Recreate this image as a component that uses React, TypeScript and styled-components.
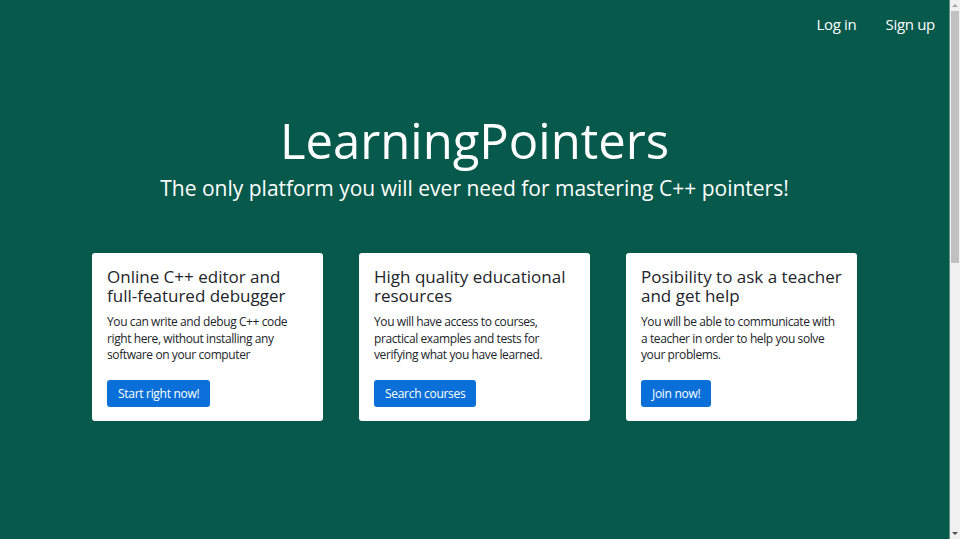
import React from "react";
import styled, { createGlobalStyle } from "styled-components";

const GlobalStyle = createGlobalStyle`
    html, body {
        margin: 0;
        padding: 0;
        overflow: hidden;
        background-color: #07594b;
        font-family: "Open Sans", "Noto Sans", sans-serif;
    }
`;

const features = [
    {
        id: 1,
        title: "Online C++ editor and full-featured debugger",
        text: "You can write and debug C++ code right here, without installing any software on your computer",
        action: "Start right now!",
    },
    {
        id: 2,
        title: "High quality educational resources",
        text: "You will have access to courses, practical examples and tests for verifying what you have learned.",
        action: "Search courses",
    },
    {
        id: 3,
        title: "Posibility to ask a teacher and get help",
        text: "You will be able to communicate with a teacher in order to help you solve your problems.",
        action: "Join now!",
    },
];

function App() {
    return (
        <Shell>
            <GlobalStyle />
            <PageStyled>
                <nav className="top-nav">
                    <a href="#login">Log in</a>
                    <a href="#signup">Sign up</a>
                </nav>
                <header className="hero">
                    <h1>LearningPointers</h1>
                    <p>The only platform you will ever need for mastering C++ pointers!</p>
                </header>
                <CardsRow>
                    {features.map((item) => (
                        <Card key={item.id}>
                            <h2>{item.title}</h2>
                            <p>{item.text}</p>
                            <Button>{item.action}</Button>
                        </Card>
                    ))}
                </CardsRow>
            </PageStyled>
            <ScrollTrack>
                <Arrow $down={false} />
                <div className="thumb-area">
                    <div className="thumb" />
                </div>
                <Arrow $down />
            </ScrollTrack>
        </Shell>
    );
}

const Shell = styled.div`
    display: flex;
    height: 100vh;
`;

const PageStyled = styled.main`
    flex: 1;
    color: #fff;

    .top-nav {
        display: flex;
        justify-content: flex-end;
        gap: 29px;
        padding: 12px 14px 0 0;
        height: 30px;

        a {
            color: #fff;
            text-decoration: none;
            font-size: 15px;
            letter-spacing: -0.3px;
            line-height: 24px;
        }
    }

    .hero {
        text-align: center;
        padding-top: 68px;

        h1 {
            margin: 0;
            font-size: 49px;
            font-weight: 400;
            line-height: 60px;
        }

        p {
            margin: 3px 0 0;
            font-size: 21px;
            line-height: 30px;
        }
    }
`;

const CardsRow = styled.section`
    display: grid;
    grid-template-columns: repeat(3, 231px);
    justify-content: center;
    gap: 36px;
    margin-top: 50px;
`;

const Card = styled.div`
    background: #fff;
    border-radius: 3px;
    padding: 14px 15px 14px;
    color: #212529;
    height: 168px;
    box-sizing: border-box;

    h2 {
        margin: 0;
        font-size: 17px;
        font-weight: 400;
        line-height: 19px;
    }

    p {
        margin: 9px 0 0;
        font-size: 12px;
        letter-spacing: -0.4px;
        line-height: 16.5px;
        height: 50px;
    }
`;

const Button = styled.button`
    margin-top: 16px;
    background: #0a6fd8;
    color: #fff;
    border: none;
    border-radius: 3px;
    height: 27px;
    padding: 0 11px;
    font-family: "Open Sans", "Noto Sans", sans-serif;
    font-size: 12px;
    letter-spacing: -0.3px;
    cursor: pointer;
`;

const ScrollTrack = styled.div`
    width: 10px;
    border-left: 1px solid #5e8f86;
    background: #f1f1f1;
    display: flex;
    flex-direction: column;
    align-items: center;

    .thumb-area {
        flex: 1;
        width: 100%;
        display: flex;
        justify-content: center;
    }

    .thumb {
        width: 8px;
        height: 252px;
        background: #c1c1c1;
    }
`;

const Arrow = styled.div<{ $down: boolean }>`
    width: 0;
    height: 0;
    margin: 4px 0;
    border-left: 3px solid transparent;
    border-right: 3px solid transparent;
    ${(p) =>
        p.$down
            ? "border-top: 3px solid #505050;"
            : "border-bottom: 3px solid #a3a3a3;"}
`;

export default App;
